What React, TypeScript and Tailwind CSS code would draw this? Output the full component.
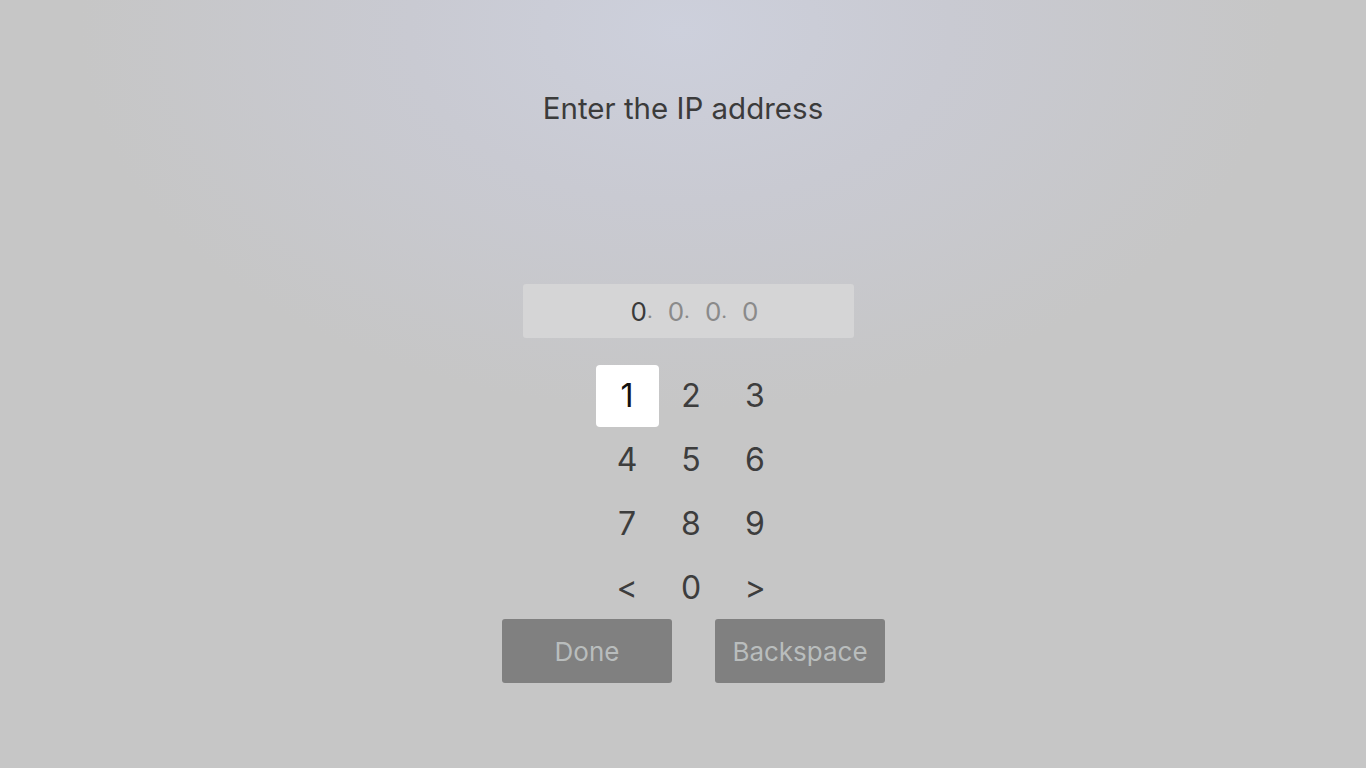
import React from "react";

const keys = ["1", "2", "3", "4", "5", "6", "7", "8", "9", "<", "0", ">"];

const App = () => {
  return (
    <div
      className="w-[1366px] h-[768px] overflow-hidden flex flex-col items-center bg-[#c6c6c6] bg-[radial-gradient(ellipse_600px_380px_at_680px_30px,#cdd0dc_0%,#c9cad2_45%,#c6c6c6_100%)] text-[#3b3b3b]"
      style={{ fontFamily: "Inter, 'Open Sans', sans-serif" }}
    >
      <h1 className="mt-[88px] h-[40px] text-[29.5px] leading-[40px] font-normal">
        Enter the IP address
      </h1>

      <div className="mt-[156px] ml-[11px] w-[331px] h-[54px] rounded-[3px] bg-[#d5d5d6] flex items-center justify-center text-[26px] pl-[12px]">
        <span className="text-[#3a3a3a]">0</span>
        <span className="text-[#8a8a8a] text-[20px] mr-[15px]">.</span>
        <span className="text-[#8a8a8a]">0</span>
        <span className="text-[#8a8a8a] text-[20px] mr-[15px]">.</span>
        <span className="text-[#8a8a8a]">0</span>
        <span className="text-[#8a8a8a] text-[20px] mr-[15px]">.</span>
        <span className="text-[#8a8a8a]">0</span>
      </div>

      <div className="mt-[27px] ml-[16px] grid grid-cols-[63px_63px_63px] gap-x-[1px] gap-y-[2px]">
        {keys.map((k, i) => (
          <div
            key={k}
            className={
              "h-[62px] flex items-center justify-center text-[32px] " +
              (i === 0 ? "bg-white rounded-[4px] text-[#111111]" : "text-[#3d3d3d]")
            }
          >
            {k}
          </div>
        ))}
      </div>

      <div className="ml-[21px] flex gap-[43px]">
        <div className="w-[170px] h-[64px] rounded-[3px] bg-[#808080] text-[#b9bdbd] text-[26px] flex items-center justify-center">
          Done
        </div>
        <div className="w-[170px] h-[64px] rounded-[3px] bg-[#808080] text-[#b9bdbd] text-[26px] flex items-center justify-center">
          Backspace
        </div>
      </div>
    </div>
  );
};

export default App;
